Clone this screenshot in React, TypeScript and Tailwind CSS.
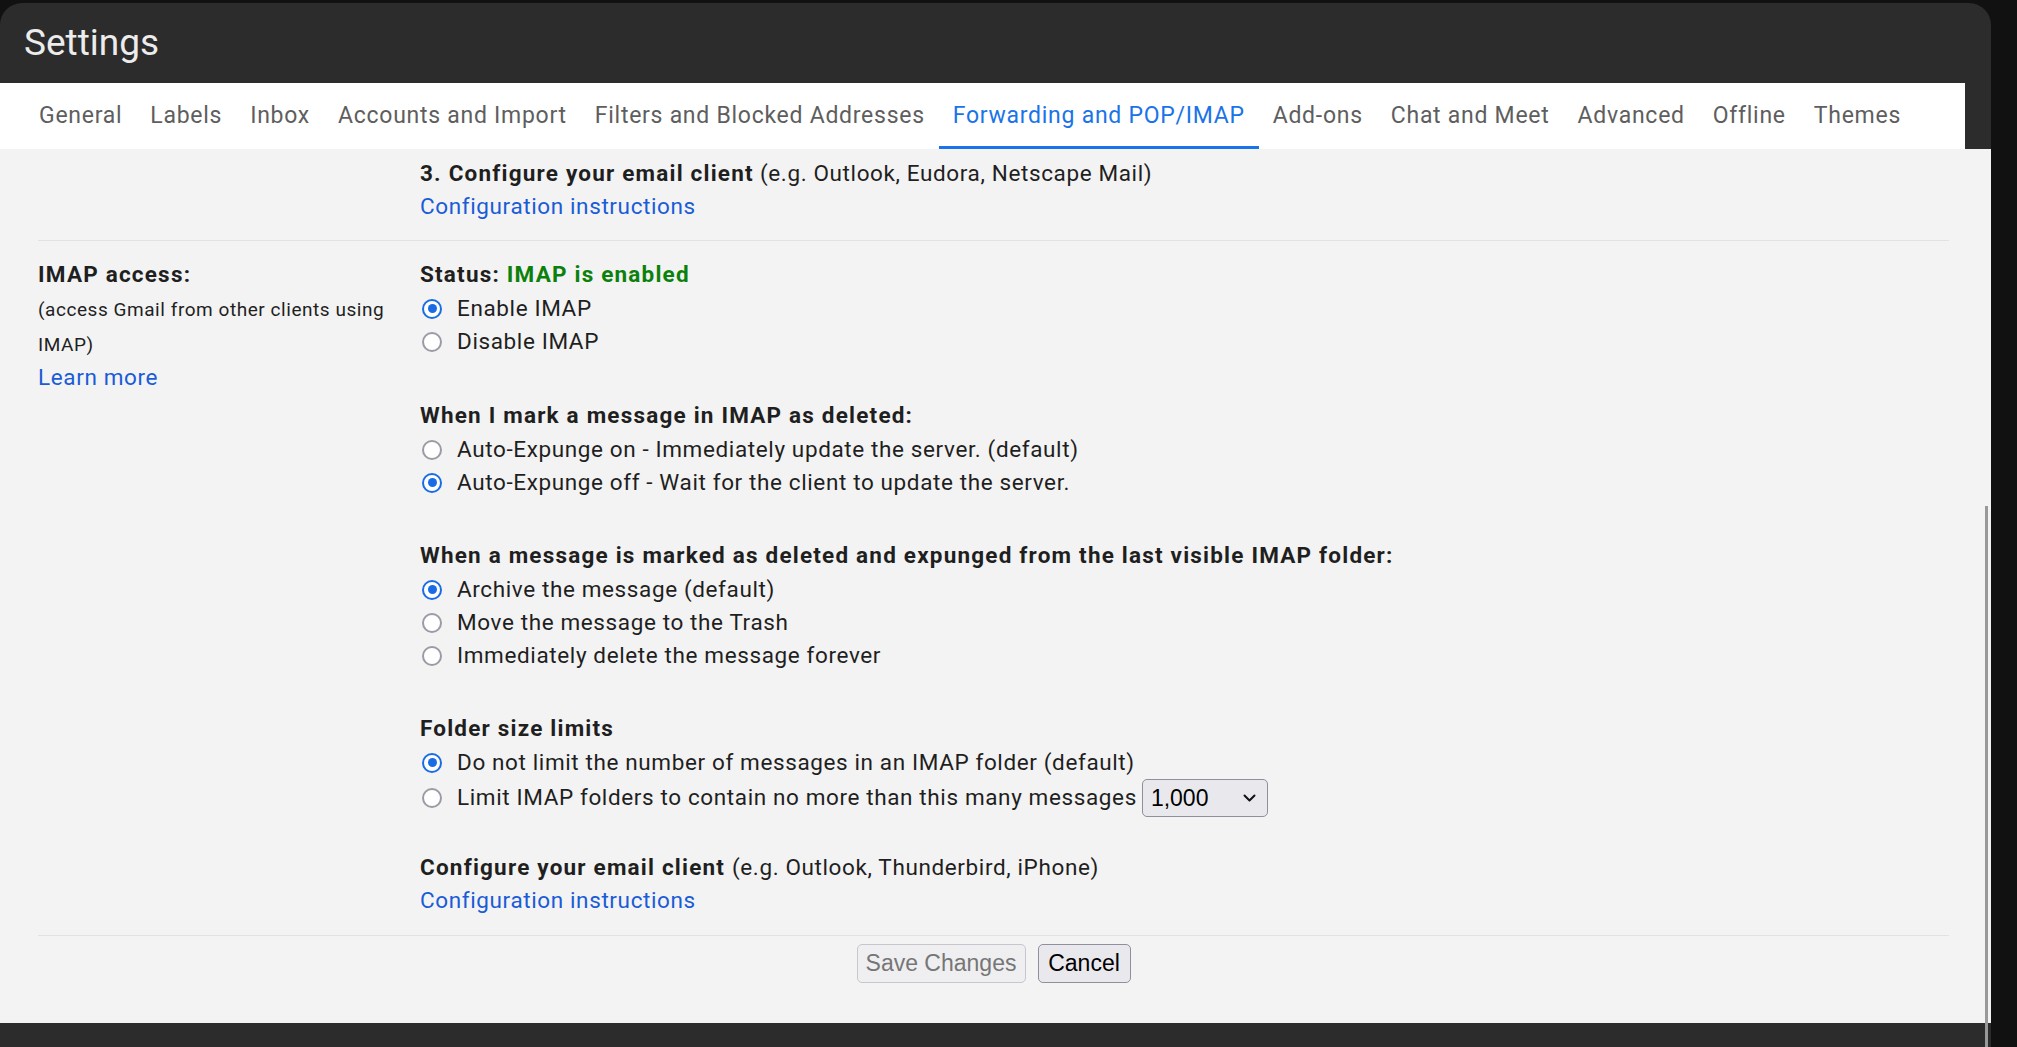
const tabs = [
  "General",
  "Labels",
  "Inbox",
  "Accounts and Import",
  "Filters and Blocked Addresses",
  "Forwarding and POP/IMAP",
  "Add-ons",
  "Chat and Meet",
  "Advanced",
  "Offline",
  "Themes",
];

function Radio({ on = false }: { on?: boolean }) {
  if (on) {
    return (
      <span className="flex h-[20px] w-[20px] shrink-0 items-center justify-center rounded-full border-[2.5px] border-[#1a6ce6] bg-white">
        <span className="h-[9px] w-[9px] rounded-full bg-[#1a6ce6]" />
      </span>
    );
  }
  return <span className="h-[20px] w-[20px] shrink-0 rounded-full border-[2.5px] border-[#9b9ba6] bg-white" />;
}

function Option({ on, children }: { on?: boolean; children: React.ReactNode }) {
  return (
    <label className="flex h-[33px] items-center gap-[15px] pl-[2px]">
      <Radio on={on} />
      <span>{children}</span>
    </label>
  );
}

function Heading({ children }: { children: React.ReactNode }) {
  return <div className="h-[34px] leading-[34px] font-bold tracking-[1.2px]">{children}</div>;
}

export default function App() {
  return (
    <div className="h-[1047px] w-[2017px] overflow-hidden bg-[#111111] pt-[3px] font-['Roboto',sans-serif]">
      <div className="relative flex h-[1044px] w-[1991px] flex-col overflow-hidden rounded-t-[22px] bg-[#2c2c2c]">
        {/* title */}
        <header className="flex h-[80px] items-center pl-[24px] text-[37px] text-[#ececec]">Settings</header>

        {/* tabs */}
        <nav className="mr-[26px] flex h-[66px] bg-white pl-[25px] text-[23px] tracking-[0.73px] text-[#5e5e5e]">
          {tabs.map((t) => (
            <div
              key={t}
              className={
                t === "Forwarding and POP/IMAP"
                  ? "flex items-center border-b-[3px] border-[#1a73e8] px-[14px] pt-[4px] text-[#1a73e8]"
                  : "flex items-center border-b-[3px] border-transparent px-[14px] pt-[4px]"
              }
            >
              {t}
            </div>
          ))}
        </nav>

        {/* content */}
        <main className="flex-1 bg-[#f3f3f3] pl-[38px] pr-[42px] text-[22.5px] tracking-[0.62px] text-[#1f1f1f]">
          <section className="border-b border-[#e2e2e2] pt-[8px] pb-[17px] pl-[382px]">
            <div className="h-[33px] leading-[33px]">
              <b className="font-bold tracking-[1.2px]">3. Configure your email client</b> (e.g. Outlook, Eudora, Netscape Mail)
            </div>
            <div className="h-[33px] leading-[33px] text-[#1a5cd7]">Configuration instructions</div>
          </section>

          <section className="flex border-b border-[#e2e2e2] pt-[16px] pb-[18px]">
            <div className="w-[382px] shrink-0">
              <div className="h-[34px] leading-[34px] font-bold tracking-[1.2px]">IMAP access:</div>
              <p className="mt-[1px] text-[19px] leading-[35px] tracking-[0.55px]">(access Gmail from other clients using IMAP)</p>
              <div className="leading-[31px] text-[#1a5cd7]">Learn more</div>
            </div>

            <div className="flex-1">
              <Heading>
                Status: <span className="text-[#0b800b]">IMAP is enabled</span>
              </Heading>
              <div className="mt-[1px]">
                <Option on>Enable IMAP</Option>
                <Option>Disable IMAP</Option>
              </div>

              <div className="mt-[40px]">
                <Heading>When I mark a message in IMAP as deleted:</Heading>
                <div className="mt-[1px]">
                  <Option>Auto-Expunge on - Immediately update the server. (default)</Option>
                  <Option on>Auto-Expunge off - Wait for the client to update the server.</Option>
                </div>
              </div>

              <div className="mt-[39px]">
                <Heading>When a message is marked as deleted and expunged from the last visible IMAP folder:</Heading>
                <div className="mt-[1px]">
                  <Option on>Archive the message (default)</Option>
                  <Option>Move the message to the Trash</Option>
                  <Option>Immediately delete the message forever</Option>
                </div>
              </div>

              <div className="mt-[39px]">
                <Heading>Folder size limits</Heading>
                <div className="mt-[1px]">
                  <Option on>Do not limit the number of messages in an IMAP folder (default)</Option>
                  <label className="flex h-[38px] items-center gap-[15px] pl-[2px]">
                    <Radio />
                    <span className="flex items-center gap-[5px]">
                      Limit IMAP folders to contain no more than this many messages
                      <span className="flex h-[38px] w-[126px] items-center justify-between rounded-[5px] border border-[#8f8f9d] bg-[#e9e9ed] pl-[8px] pr-[11px] font-['Liberation_Sans',sans-serif] text-[23px] tracking-normal text-black">
                        1,000
                        <svg width="13" height="8" viewBox="0 0 13 8" fill="none">
                          <path d="M1.5 1.5 6.5 6.5l5-5" stroke="#111" strokeWidth="2" strokeLinecap="round" strokeLinejoin="round" />
                        </svg>
                      </span>
                    </span>
                  </label>
                </div>
              </div>

              <div className="mt-[33px]">
                <Heading>
                  Configure your email client{" "}
                  <span className="font-normal tracking-[0.62px]">(e.g. Outlook, Thunderbird, iPhone)</span>
                </Heading>
                <div className="h-[33px] leading-[33px] text-[#1a5cd7]">Configuration instructions</div>
              </div>
            </div>
          </section>

          <div className="flex justify-center gap-[12px] pt-[8px] font-['Liberation_Sans',sans-serif] text-[23px] tracking-normal">
            <button className="h-[39px] w-[169px] rounded-[5px] border border-[#c6c6cc] bg-[#efeff1] text-[#767676]">
              Save Changes
            </button>
            <button className="h-[39px] w-[93px] rounded-[5px] border border-[#8f8f9d] bg-[#e9e9ed] text-black">
              Cancel
            </button>
          </div>
        </main>

        {/* bottom band */}
        <div className="h-[24px] shrink-0" />

        {/* scrollbar thumb */}
        <div className="absolute top-[503px] right-[3px] bottom-0 w-[3px] bg-[#999999]" />
      </div>
    </div>
  );
}
